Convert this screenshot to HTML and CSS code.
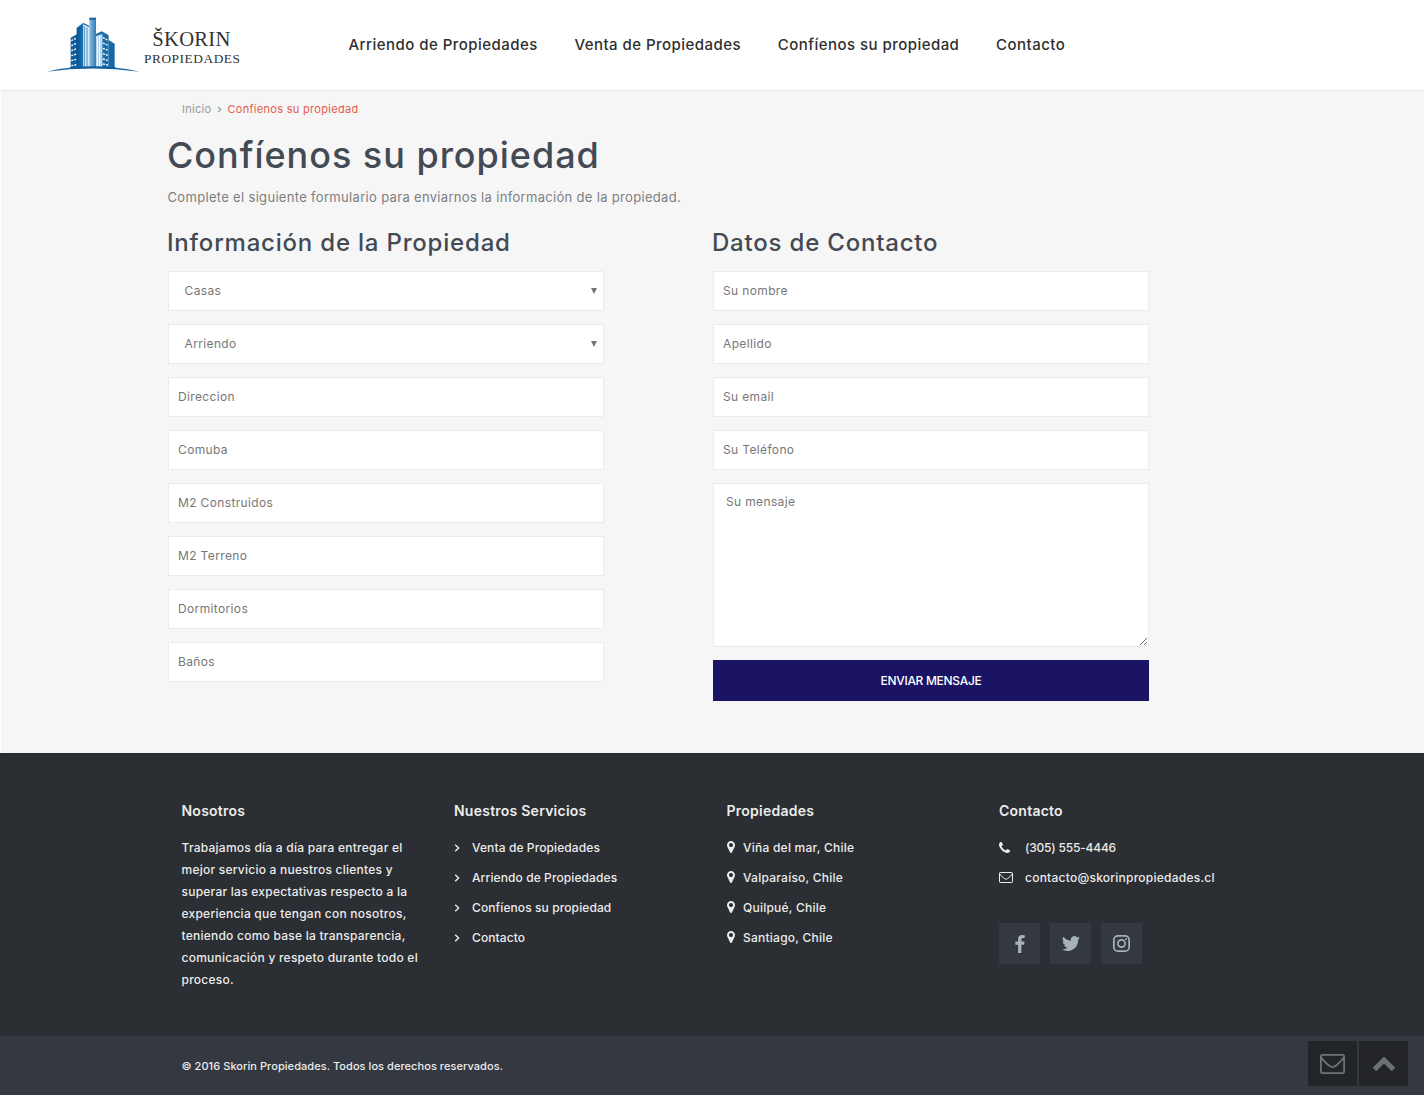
FILE: index.html
```html
<!DOCTYPE html>
<html lang="es">
<head>
<meta charset="utf-8">
<title>Confíenos su propiedad</title>
<link rel="stylesheet" href="styles.css">
</head>
<body>
<svg width="0" height="0" class="sprite" aria-hidden="true">
  <symbol id="chev" viewBox="0 0 6 8"><path d="M1.2 .8 4.6 4 1.2 7.2" fill="none" stroke="currentColor" stroke-width="1.4"/></symbol>
  <symbol id="pin" viewBox="0 0 1024 1536"><path fill="currentColor" d="M768 512q0-106-75-181t-181-75-181 75-75 181 75 181 181 75 181-75 75-181zm256 0q0 109-33 179l-364 774q-16 33-47.500 52t-67.500 19-67.500-19-46.500-52L33 691Q0 621 0 512 0 300 150 150T512 0t362 150 150 362z"/></symbol>
  <symbol id="phone" viewBox="0 0 1408 1408"><path fill="currentColor" d="M1408 1112q0 27-10 70.500t-21 68.500q-21 50-122 106-94 51-186 51-27 0-53-3.500t-57.500-12.500-47-14.500T856 1357t-49-18q-98-35-175-83-127-79-264-216T152 776q-48-77-83-175-3-9-18-49t-20.500-55.500-14.500-47T3.500 392 0 339q0-92 51-186Q107 52 157 31q25-11 68.500-21T296 0q14 0 21 3 18 6 53 76 11 19 30 54t35 63.500 31 53.500q3 4 17.500 25t21.500 35.500 7 28.500q0 20-28.500 50t-62 55-62 53-28.500 46q0 9 5 22.500t8.500 20.500 14 24 11.500 19q76 137 174 235t235 174q2 1 19 11.500t24 14 20.500 8.500 22.500 5q18 0 46-28.500t53-62 55-62 50-28.500q14 0 28.500 7t35.500 21.500 25 17.500q25 15 53.500 31t63.500 35 54 30q70 35 76 53 3 7 3 21z"/></symbol>
  <symbol id="mail" viewBox="0 0 28 22"><path fill="none" stroke="currentColor" stroke-width="2" stroke-linejoin="round" d="M2.500 1h23A1.500 1.500 0 0 1 27 2.500v17a1.500 1.500 0 0 1-1.500 1.500h-23A1.500 1.500 0 0 1 1 19.500v-17A1.500 1.500 0 0 1 2.500 1zM1.500 3.500C2 6 11 14.500 14 14.500S26 6 26.500 3.500"/></symbol>
</svg>

<header class="header">
  <svg class="logo" viewBox="48 48 588 171" role="img" aria-label="Škorin Propiedades">
    <defs>
      <linearGradient id="dark" x1="0" y1="0" x2="1" y2="0"><stop offset="0" stop-color="#0a4f8c"/><stop offset="1" stop-color="#1f76b5"/></linearGradient>
      <linearGradient id="light" x1="0" y1="0" x2="1" y2="0"><stop offset="0" stop-color="#8dbbdf"/><stop offset="1" stop-color="#2e7db8"/></linearGradient>
    </defs>
    <path fill="#0f5f9f" d="M122 113 142 102 142 203 122 203z"/>
    <path fill="url(#dark)" d="M140 84 160 68 160 203 140 203z"/>
    <path fill="#1a6aa8" d="M160 68 177 77 177 82 160 73z"/>
    <path fill="#d5e7f4" d="M160 76 177 84 177 202 160 202z"/>
    <path stroke="#4c93c9" stroke-width="3" d="M163 78V202M171 82V202"/>
    <path fill="url(#light)" d="M178 54h20v148h-20z"/>
    <path fill="#155f9c" d="M178 53h20v6h-20z"/>
    <path fill="#a9cde8" d="M198 104 215 97 215 202 198 202z"/>
    <path stroke="#fff" stroke-width="3" d="M202 108V200M209 106V200"/>
    <path fill="#1a6aa8" d="M198 102 215 94 236 106 236 203 217 203 217 102 198 108z"/>
    <path fill="#1768a8" d="M236 120 254 131 254 203 236 203z"/>
    <path stroke="#fff" stroke-width="4" stroke-dasharray="6 3" d="M124 122 140 114M124 137 140 130M124 152 140 146M124 167 140 162M124 182 140 178M124 197 140 194M219 113 234 121M219 129 234 136M219 145 234 151M219 161 234 166M219 177 234 181M219 192 234 195"/>
    <path fill="#0f5f9f" d="M50 215Q186 182 329 215 186 196 50 215z"/>
    <path fill="#0f5f9f" d="M120 201h136v3H120z"/>
    <text x="367" y="139" class="logo-name" textLength="234">ŠKORIN</text>
    <text x="342" y="189" class="logo-sub" textLength="288">PROPIEDADES</text>
  </svg>
  <nav class="nav">
    <a>Arriendo de Propiedades</a><a>Venta de Propiedades</a><a>Confíenos su propiedad</a><a>Contacto</a>
  </nav>
</header>

<main class="main">
  <div class="crumbs"><span>Inicio</span><svg><use href="#chev"/></svg><span class="current">Confíenos su propiedad</span></div>
  <h1>Confíenos su propiedad</h1>
  <p class="intro">Complete el siguiente formulario para enviarnos la información de la propiedad.</p>
  <form class="form">
    <section class="col">
      <h2>Información de la Propiedad</h2>
      <div class="field select"><span>Casas</span><i></i></div>
      <div class="field select"><span>Arriendo</span><i></i></div>
      <input class="field" placeholder="Direccion">
      <input class="field" placeholder="Comuba">
      <input class="field" placeholder="M2 Construidos">
      <input class="field" placeholder="M2 Terreno">
      <input class="field" placeholder="Dormitorios">
      <input class="field" placeholder="Baños">
    </section>
    <section class="col">
      <h2>Datos de Contacto</h2>
      <input class="field" placeholder="Su nombre">
      <input class="field" placeholder="Apellido">
      <input class="field" placeholder="Su email">
      <input class="field" placeholder="Su Teléfono">
      <textarea class="field area" placeholder="Su mensaje"></textarea>
      <button type="button" class="send">ENVIAR MENSAJE</button>
    </section>
  </form>
</main>

<footer class="footer">
  <section>
    <h3>Nosotros</h3>
    <p class="about">Trabajamos día a día para entregar el<br>mejor servicio a nuestros clientes y<br>superar las expectativas respecto a la<br>experiencia que tengan con nosotros,<br>teniendo como base la transparencia,<br>comunicación y respeto durante todo el<br>proceso.</p>
  </section>
  <section>
    <h3>Nuestros Servicios</h3>
    <ul class="links services">
      <li><svg><use href="#chev"/></svg>Venta de Propiedades</li>
      <li><svg><use href="#chev"/></svg>Arriendo de Propiedades</li>
      <li><svg><use href="#chev"/></svg>Confíenos su propiedad</li>
      <li><svg><use href="#chev"/></svg>Contacto</li>
    </ul>
  </section>
  <section>
    <h3>Propiedades</h3>
    <ul class="links places">
      <li><svg><use href="#pin"/></svg>Viña del mar, Chile</li>
      <li><svg><use href="#pin"/></svg>Valparaíso, Chile</li>
      <li><svg><use href="#pin"/></svg>Quilpué, Chile</li>
      <li><svg><use href="#pin"/></svg>Santiago, Chile</li>
    </ul>
  </section>
  <section>
    <h3>Contacto</h3>
    <ul class="links contact">
      <li class="tel"><svg class="phone"><use href="#phone"/></svg>(305) 555-4446</li>
      <li class="email"><svg class="mail"><use href="#mail"/></svg>contacto@skorinpropiedades.cl</li>
    </ul>
    <div class="social">
      <a><svg width="10" height="18" viewBox="0 0 864 1664"><path fill="currentColor" d="M864 12v264H707q-86 0-116 36t-30 108v189h293l-39 296H561v759H255V905H0V609h255V391q0-186 104-288.500T636 0q147 0 228 12z"/></svg></a>
      <a><svg width="18" height="15" viewBox="0 0 24 19.500"><path fill="currentColor" d="M24 2.300a9.800 9.800 0 0 1-2.800.8A4.900 4.900 0 0 0 23.300.4a9.900 9.900 0 0 1-3.100 1.200 4.900 4.900 0 0 0-8.400 4.500A14 14 0 0 1 1.700.9a4.900 4.900 0 0 0 1.500 6.600A4.900 4.900 0 0 1 1 6.900a4.900 4.900 0 0 0 3.900 4.900 5 5 0 0 1-2.200.1 4.900 4.900 0 0 0 4.600 3.400A9.900 9.900 0 0 1 0 17.300a14 14 0 0 0 21.500-12.400A10 10 0 0 0 24 2.300z"/></svg></a>
      <a><svg width="17" height="17" viewBox="0 0 17 17" fill="none" stroke="currentColor" stroke-width="1.700"><rect x=".85" y=".85" width="15.300" height="15.300" rx="4"/><circle cx="8.500" cy="8.500" r="3.600"/><circle cx="13" cy="4" r="1" fill="currentColor" stroke="none"/></svg></a>
    </div>
  </section>
</footer>
<div class="legal">© 2016 Skorin Propiedades. Todos los derechos reservados.</div>

<div class="floating">
  <a><svg width="25" height="20" viewBox="0 0 28 22" preserveAspectRatio="none"><use href="#mail"/></svg></a>
  <a><svg width="24" height="16" viewBox="0 0 24 16"><path d="M2.500 13.500 12 4l9.500 9.500" fill="none" stroke="currentColor" stroke-width="5"/></svg></a>
</div>
</body>
</html>
```
FILE: styles.css
```css
* { box-sizing: border-box; }
body {
  margin: 0;
  width: 1424px;
  height: 1095px;
  overflow: hidden;
  display: flex;
  flex-direction: column;
  background: #f6f6f6;
  font-family: Inter, "Liberation Sans", sans-serif;
}
h1, h2, h3, p, ul { margin: 0; padding: 0; }
ul { list-style: none; }
svg { display: block; flex: none; }
.sprite { position: absolute; }

.header {
  height: 91px;
  display: flex;
  align-items: flex-start;
  background: #fff;
  border-bottom: 1px solid #e8e8e8;
}
.logo { width: 196px; height: 57px; margin: 16px 0 0 46px; }
.logo-name { font: 62px "Liberation Serif", serif; fill: #333; }
.logo-sub { font: 40px "Liberation Serif", serif; fill: #333; }
.nav {
  display: flex;
  gap: 36.700px;
  margin-left: 106.500px;
  padding-top: 35px;
  font-size: 15px;
  font-weight: 500;
  line-height: 20px;
  letter-spacing: .46px;
  color: #2f2f2f;
}

.main {
  height: 662px;
  padding: 10px 0 0 167px;
  border-left: 1px solid #fff;
  color: #777;
}
.crumbs {
  display: flex;
  align-items: center;
  height: 16px;
  padding-left: 14px;
  font-size: 11px;
  letter-spacing: .3px;
  color: #949a9d;
}
.crumbs svg { width: 5px; height: 7px; margin: 0 5px 0 6px; }
.current { color: #e9594f; }
h1 {
  margin-top: 14px;
  font-size: 36px;
  font-weight: 500;
  line-height: 48px;
  letter-spacing: .97px;
  color: #434a54;
  text-indent: -1px;
}
.intro {
  margin-top: 8px;
  font-size: 13px;
  line-height: 20px;
  letter-spacing: .32px;
  color: #7b7f82;
  text-indent: -.5px;
}
.form { display: flex; gap: 109px; margin-top: 21px; }
.col { width: 436px; display: flex; flex-direction: column; gap: 13px; }
h2 {
  font-size: 24px;
  font-weight: 500;
  line-height: 30px;
  letter-spacing: .8px;
  color: #434a54;
  text-indent: -1px;
}
.field {
  display: block;
  width: 436px;
  height: 40px;
  padding: 0 9px 2px;
  border: 1px solid #ebebeb;
  border-radius: 0;
  outline: 0;
  background: #fff;
  font: 12px Inter, "Liberation Sans", sans-serif;
  letter-spacing: .36px;
  color: #777;
}
.field::placeholder { color: #777; opacity: 1; }
.select {
  display: flex;
  align-items: center;
  justify-content: space-between;
  padding: 0 6px 1px 15.500px;
}
.select i {
  border: 3.500px solid transparent;
  border-top: 6px solid #70757a;
  border-bottom: 0;
}
.area { height: 164px; padding: 10px 12px; resize: vertical; }
.send {
  height: 41px;
  padding: 0;
  border: 0;
  background: #1b1464;
  color: #fff;
  font: 500 12px Inter, "Liberation Sans", sans-serif;
  letter-spacing: -.3px;
}

.footer {
  height: 283px;
  display: grid;
  grid-template-columns: repeat(4, 272.500px);
  padding: 48px 0 0 181.500px;
  background: #2b2e32;
  color: #ececec;
  font-size: 12px;
  font-weight: 500;
  letter-spacing: .24px;
}
h3 { font-size: 14px; font-weight: 600; line-height: 20px; letter-spacing: .24px; }
.about { margin-top: 16px; line-height: 22px; white-space: nowrap; }
.links { margin-top: 11px; }
.links li { height: 30px; display: flex; align-items: center; white-space: nowrap; }
.services { letter-spacing: .1px; }
.services svg { width: 6px; height: 8px; margin: 2px 12px 0 0; }
.places svg { width: 8px; height: 12px; margin-right: 8.500px; }
.phone { width: 11px; height: 11px; margin-right: 15px; }
.mail { width: 14px; height: 11px; margin-right: 12px; }
.tel { letter-spacing: -.2px; }
.email { letter-spacing: .24px; }
.social { display: flex; gap: 10px; margin-top: 31px; }
.social a {
  width: 41px;
  height: 41px;
  display: grid;
  place-items: center;
  background: #333841;
  color: #a7b1b8;
}
.legal {
  height: 59px;
  padding-left: 181.500px;
  background: #343840;
  color: #ececec;
  font-size: 11px;
  font-weight: 500;
  line-height: 60px;
  letter-spacing: .06px;
}
.floating { position: fixed; right: 16px; bottom: 9px; display: flex; gap: 2px; }
.floating a {
  width: 49px;
  height: 45px;
  display: grid;
  place-items: center;
  background: #222427;
  color: #6b7377;
}
```
